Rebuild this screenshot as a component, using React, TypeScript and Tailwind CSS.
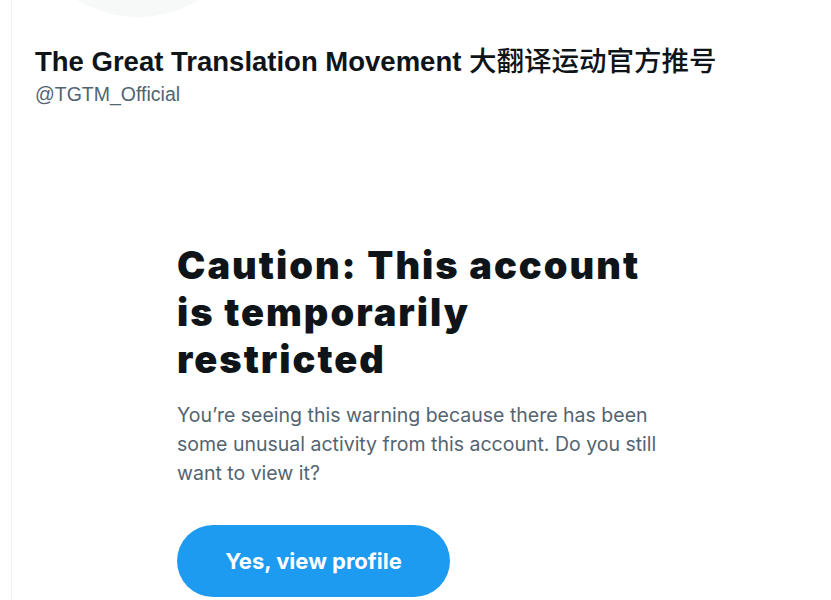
import React from "react";

export default function App() {
  return (
    <div className="w-[831px] h-[600px] overflow-hidden bg-white flex">
      <div className="w-[11px] shrink-0" />
      <div className="flex-1 border-l border-[#eff3f4] flex flex-col">
        <div className="h-[17px] relative">
          <div className="absolute left-[8px] bottom-0 w-[236px] h-[236px] rounded-full bg-[#f7f9f9]" />
        </div>
        <div className="pl-[23px] pt-[25px] flex flex-col">
          <div
            className="text-[27.5px] leading-[34px] font-bold text-[#0f1419] whitespace-nowrap"
            style={{ fontFamily: '"Liberation Sans", Arial, sans-serif' }}
          >
            The Great Translation Movement{" "}
            <span
              className="text-[27.5px]"
              style={{ fontFamily: '"Noto Sans CJK SC", sans-serif', fontWeight: 500 }}
            >
              大翻译运动官方推号
            </span>
          </div>
          <div
            className="mt-[3px] text-[19.5px] leading-[24px] text-[#536471]"
            style={{ fontFamily: '"Liberation Sans", Arial, sans-serif' }}
          >
            @TGTM_Official
          </div>
        </div>
        <div className="pl-[165px] pt-[136px] flex flex-col">
          <h1
            className="text-[38px] leading-[47px] font-black text-[#0f1419] w-[500px] tracking-[2px]"
            style={{ fontFamily: 'Inter, sans-serif' }}
          >
            Caution: This account is temporarily restricted
          </h1>
          <p
            className="mt-[18px] text-[19.5px] leading-[29px] text-[#536471] w-[495px]"
            style={{ fontFamily: 'Inter, sans-serif' }}
          >
            You’re seeing this warning because there has been some unusual activity from this account. Do you still want to view it?
          </p>
          <div className="mt-[37px]">
            <button
              className="w-[273px] h-[72px] rounded-full bg-[#1d9bf0] text-white text-[22px] font-bold"
              style={{ fontFamily: 'Inter, sans-serif' }}
            >
              Yes, view profile
            </button>
          </div>
        </div>
      </div>
    </div>
  );
}
